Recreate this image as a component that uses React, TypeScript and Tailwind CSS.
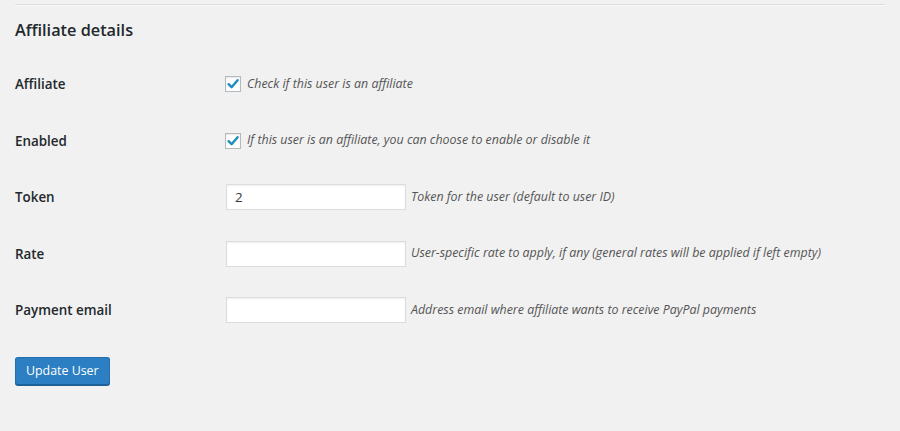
import React from 'react'

const font = { fontFamily: '"Open Sans", "Noto Sans", sans-serif' }

function Checkbox() {
  return (
    <span className="flex items-center justify-center w-4 h-4 bg-white border border-[#b4b9be] shadow-[inset_0_1px_2px_rgba(0,0,0,0.1)] shrink-0">
      <svg width="14" height="14" viewBox="0 0 14 14">
        <path d="M2.6 7.2 L5.6 10.2 L11.6 3.2" fill="none" stroke="#1e8cbe" strokeWidth="2.4" strokeLinecap="round" strokeLinejoin="round" />
      </svg>
    </span>
  )
}

function Row({ label, children }: { label: string; children: React.ReactNode }) {
  return (
    <div className="flex items-center h-[56.5px]">
      <div className="w-[211px] text-[13.4px] font-semibold text-[#23282d]">{label}</div>
      <div className="flex items-center">{children}</div>
    </div>
  )
}

function TextField({ value, hint }: { value?: string; hint: string }) {
  return (
    <>
      <input
        type="text"
        defaultValue={value}
        className="w-[180px] h-[26px] bg-white border border-[#ddd] shadow-[inset_0_1px_2px_rgba(0,0,0,0.07)] px-2 text-[13.4px] text-[#32373c] outline-none"
        style={font}
      />
      <span className="ml-[5px] text-[12.4px] italic text-[#555]">{hint}</span>
    </>
  )
}

export default function App() {
  return (
    <div className="w-[900px] h-[431px] bg-[#f1f1f1] px-[15px] overflow-hidden" style={font}>
      <div className="pt-[4px]">
        <div className="border-t border-[#dcdcdc] border-b border-b-[#fafafa]" />
      </div>

      <h2 className="mt-[12px] text-[16.3px] leading-[25px] font-semibold text-[#23282d]">Affiliate details</h2>

      <div className="mt-[13px]">
        <Row label="Affiliate">
          <span className="-ml-px"><Checkbox /></span>
          <span className="ml-[6px] text-[12.4px] italic text-[#555]">Check if this user is an affiliate</span>
        </Row>
        <Row label="Enabled">
          <span className="-ml-px"><Checkbox /></span>
          <span className="ml-[6px] text-[12.4px] italic text-[#555]">If this user is an affiliate, you can choose to enable or disable it</span>
        </Row>
        <Row label="Token">
          <TextField value="2" hint="Token for the user (default to user ID)" />
        </Row>
        <Row label="Rate">
          <TextField hint="User-specific rate to apply, if any (general rates will be applied if left empty)" />
        </Row>
        <Row label="Payment email">
          <TextField hint="Address email where affiliate wants to receive PayPal payments" />
        </Row>
      </div>

      <button
        type="button"
        className="mt-[18px] h-[28px] pt-px px-[10px] rounded-[3px] bg-[#2b7fc2] border border-[#236fae] border-b-[#1d619b] shadow-[0_1px_0_#1d619b] text-white text-[12.4px]"
        style={font}
      >
        Update User
      </button>
    </div>
  )
}
